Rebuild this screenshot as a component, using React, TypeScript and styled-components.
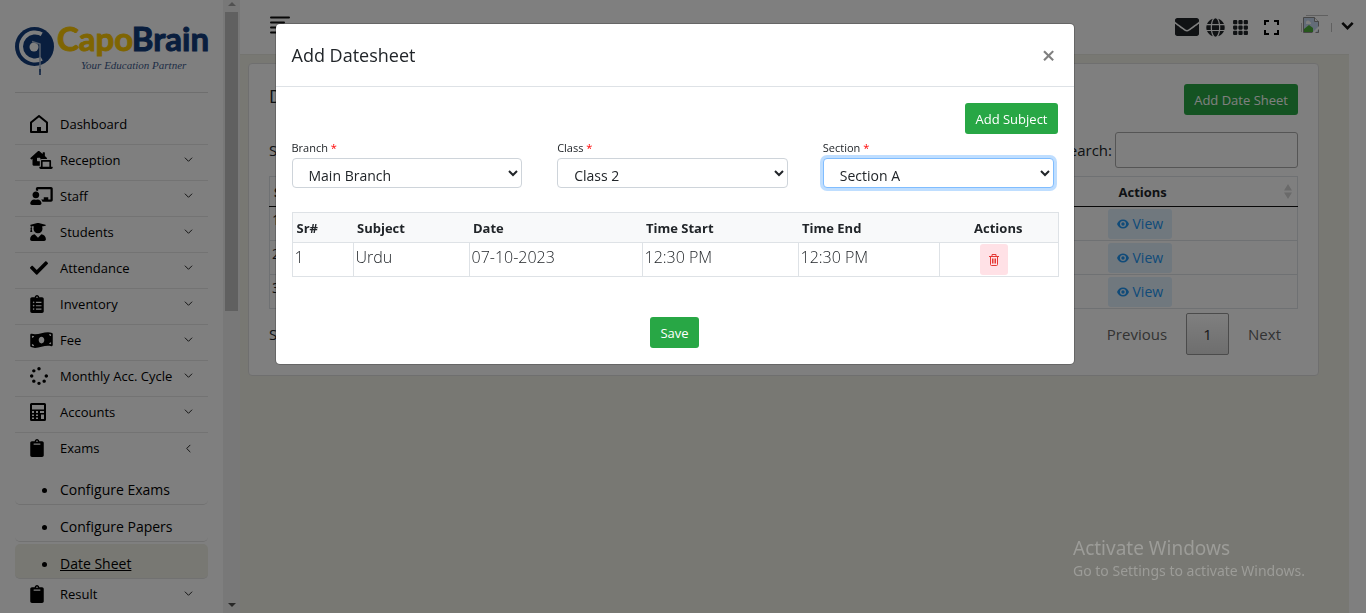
import React from 'react';
import styled, { createGlobalStyle, css } from 'styled-components';
import {
  FaLaptopHouse, FaChalkboardTeacher, FaUserGraduate, FaCheck, FaClipboardList,
  FaMoneyBillWave, FaSpinner, FaClipboard, FaEnvelope, FaGlobe,
} from 'react-icons/fa';
import { BsGrid3X3GapFill } from 'react-icons/bs';

const GlobalStyle = createGlobalStyle`
  *, *::before, *::after { box-sizing: border-box; }
  body {
    margin: 0;
    background: #fff;
    color: #212529;
    font-family: "Open Sans", "Noto Sans", sans-serif;
    font-size: 14px;
    line-height: 20px;
  }
  button, input, select { font-family: inherit; }
`;

/* ---------- Sidebar ---------- */

const Page = styled.div`
  display: flex;
  height: 100vh;
  overflow: hidden;
`;

const Sidebar = styled.aside`
  flex: 0 0 240px;
  display: flex;
  overflow: hidden;
  background: #fff;
`;

const SidebarBody = styled.div`
  flex: 1;
  padding: 8px 15px 0;
  overflow: hidden;
`;

const ScrollTrack = styled.div`
  flex: 0 0 17px;
  display: flex;
  flex-direction: column;
  align-items: center;
  background: #f1f1f1;
`;

const ScrollThumb = styled.div`
  width: 13px;
  height: 299px;
  background: #c1c1c1;
`;

const ScrollArrow = styled.div<{ $down?: boolean }>`
  width: 0;
  height: 0;
  margin: ${p => (p.$down ? 'auto 0 6px' : '2px 0 6px')};
  border: 4px solid transparent;
  ${p => (p.$down
    ? css`border-top-color: #505050; border-bottom-width: 0;`
    : css`border-bottom-color: #a3a3a3; border-top-width: 0;`)}
`;

const LogoLink = styled.a`
  display: block;
  height: 85px;
  border-bottom: 1px solid #dcdcdc;
  svg { display: block; }
`;

const Menu = styled.ul`
  list-style: none;
  margin: 16px 0 0;
  padding: 0;
`;

const MenuLink = styled.a`
  display: flex;
  align-items: center;
  height: 36px;
  padding: 0 15px 6px;
  border-bottom: 1px solid #e6e6e6;
  color: #000;
  text-decoration: none;
`;

const MenuIcon = styled.span<{ $glyph?: number }>`
  flex: 0 0 30px;
  display: flex;
  align-items: center;
  svg {
    width: ${p => p.$glyph ?? 18}px;
    height: 18px;
  }
`;

const MenuText = styled.span`
  flex: 1;
  font-size: 13px;
  white-space: nowrap;
`;

const SubMenu = styled.ul`
  display: grid;
  gap: 2px;
  list-style: none;
  margin: 1px 0 0;
  padding: 0;
`;

const SubLink = styled.a<{ $active?: boolean }>`
  display: flex;
  align-items: center;
  height: 35px;
  padding: 6px 0 0 27px;
  border-bottom: 1px solid #e2e2e2;
  border-radius: 5px;
  color: #000;
  background: ${p => (p.$active ? '#f1f1e6' : 'transparent')};
  text-decoration: ${p => (p.$active ? 'underline' : 'none')};
  &::before {
    content: '';
    width: 5px;
    height: 5px;
    margin-right: 13px;
    border-radius: 50%;
    background: #000;
  }
`;

const ExamsLink = styled(MenuLink)`border-bottom: 0;`;

/* ---------- Main area ---------- */

const Main = styled.main`
  flex: 1;
  display: flex;
  flex-direction: column;
  min-width: 0;
`;

const TopBar = styled.header`
  flex: 0 0 54px;
  display: flex;
  align-items: center;
  padding: 0 12px 0 30px;
  background: #fff;
`;

const IconButton = styled.button`
  display: flex;
  padding: 0;
  border: 0;
  background: none;
  color: #000;
`;

const MenuButton = styled(IconButton)`padding-bottom: 5px;`;

const AccountButton = styled(IconButton)`padding-bottom: 4px;`;

const TopIcons = styled.div`
  display: flex;
  align-items: center;
  margin-left: auto;
`;

const TopIconGroup = styled.div`
  display: flex;
  align-items: center;
  gap: 7px;
  margin-right: 15px;
`;

const Avatar = styled.span`
  display: flex;
  margin: 0 8px 0 22px;
`;

const Content = styled.section`
  flex: 1;
  margin-right: 17px;
  padding: 8px 30px 8px 8px;
  border-top: 1px solid #e9e9e0;
  background: #f1f1e6;
`;

const Card = styled.div`
  padding: 20px 20px 16px;
  border: 1px solid #dfdfdf;
  border-radius: 4px;
  background: #fff;
`;

const CardHead = styled.div`
  display: flex;
  align-items: flex-start;
  justify-content: space-between;
`;

const CardTools = styled.div`
  display: flex;
  align-items: center;
  justify-content: space-between;
  padding: 17px 0 8px;
  font-size: 15px;
`;

const CardFoot = styled.div`
  display: flex;
  align-items: center;
  justify-content: space-between;
  height: 50px;
  font-size: 15px;
`;

const CardTitle = styled.h1`
  margin: 0;
  font-size: 18px;
  line-height: 24px;
  font-weight: 400;
`;

const GreenButton = styled.button`
  height: 31px;
  padding: 0 10px;
  border: 0;
  border-radius: 3px;
  background: #28a745;
  color: #fff;
  font-size: 13px;
  line-height: 20px;
`;

const SearchLabel = styled.label`
  display: flex;
  align-items: center;
  gap: 3px;
`;

const SearchInput = styled.input`
  width: 183px;
  height: 36px;
  border: 1px solid #aaa;
  border-radius: 3px;
  background: #fff;
`;

const ListTable = styled.table`
  width: 100%;
  border: 1px solid #dee2e6;
  border-collapse: collapse;
  table-layout: fixed;
  th {
    height: 30px;
    padding: 0 10px 0 4px;
    border-bottom: 1px solid #111;
    text-align: left;
    font-size: 13px;
  }
  td {
    height: 34px;
    padding: 0 2px;
    border-bottom: 1px solid #dee2e6;
  }
  td:first-child { padding-bottom: 8px; }
  th:last-child, td:last-child { width: 192px; }
`;

const SortHead = styled.span`
  display: flex;
  align-items: center;
  justify-content: space-between;
  padding-left: 9px;
  svg { margin-right: -5px; }
`;

const ViewButton = styled.button`
  display: flex;
  align-items: center;
  gap: 4px;
  height: 30px;
  padding: 0 9px;
  border: 0;
  border-radius: 3px;
  background: #e1f0fd;
  color: #2196f3;
  font-size: 14px;
`;

const Pager = styled.nav`
  display: flex;
  align-items: center;
  margin-right: 17px;
  gap: 19px;
`;

const PagerButton = styled.button<{ $current?: boolean }>`
  height: 42px;
  padding: 0;
  border: 0;
  background: none;
  color: #666;
  font-size: 15px;
  ${p => p.$current && css`
    width: 43px;
    border: 1px solid #979797;
    border-radius: 2px;
    background: linear-gradient(#fff, #dcdcdc);
    color: #333;
  `}
`;

/* ---------- Dialog ---------- */

const Backdrop = styled.div`
  position: fixed;
  inset: 0;
  padding: 23px 17px 23px 0;
  background: rgba(0, 0, 0, 0.5);
`;

const Dialog = styled.div`
  width: 100%;
  max-width: 800px;
  margin: 0 auto;
  border: 1px solid rgba(0, 0, 0, 0.2);
  border-radius: 5px;
  background: #fff;
  background-clip: padding-box;
`;

const DialogHeader = styled.div`
  display: flex;
  align-items: center;
  justify-content: space-between;
  height: 63px;
  padding: 0 18px 0 16px;
  border-bottom: 1px solid #dee2e6;
`;

const DialogTitle = styled.h2`
  margin: 0;
  font-size: 18px;
  line-height: 27px;
  font-weight: 400;
`;

const CloseButton = styled.button`
  padding: 0;
  border: 0;
  background: none;
  color: #7f7f7f;
  font-size: 24px;
  line-height: 24px;
  font-weight: 600;
`;

const DialogBody = styled.form`
  padding: 16px;
`;

const Actions = styled.div<{ $align: string }>`
  display: flex;
  justify-content: ${p => p.$align};
`;

const Fields = styled.div`
  display: grid;
  grid-template-columns: repeat(3, 1fr);
  gap: 35px;
  margin: 4px 0 24px;
  padding-right: 4px;
`;

const Field = styled.label`
  display: block;
  font-size: 11px;
  line-height: 20px;
`;

const Required = styled.span`color: #f00;`;

const Select = styled.select<{ $active?: boolean }>`
  display: block;
  width: 100%;
  height: 30px;
  padding: 5px 0 0 12px;
  border: 1px solid ${p => (p.$active ? '#80bdff' : '#ced4da')};
  border-radius: 4px;
  outline: 0;
  background: #fff;
  color: #212529;
  font-size: 14px;
  box-shadow: ${p => (p.$active ? '0 0 0 3px rgba(0, 123, 255, 0.25)' : 'none')};
`;

const SubjectTable = styled.table`
  width: 100%;
  margin-bottom: 40px;
  border-collapse: collapse;
  table-layout: fixed;
  border: 1px solid #dee2e6;
  thead { background: #f8f9fa; }
  th {
    height: 30px;
    padding: 0 4px;
    border-bottom: 1px solid #dee2e6;
    text-align: left;
    font-size: 13px;
  }
  td {
    height: 34px;
    padding: 0 2px 6px;
    border: 1px solid #dee2e6;
    font-size: 16px;
    font-weight: 300;
  }
  th:last-child { text-align: center; }
  td:last-child { padding: 1px 9px 1px 0; }
`;

const DeleteButton = styled.button`
  display: flex;
  align-items: center;
  justify-content: center;
  width: 28px;
  height: 31px;
  margin: 0 auto;
  padding: 0;
  border: 0;
  border-radius: 3px;
  background: #ffe1e6;
  color: #e53935;
`;

const Watermark = styled.div`
  position: fixed;
  right: 57px;
  bottom: 32px;
  min-width: 236px;
  color: #9c9c98;
  font-family: "Noto Sans", sans-serif;
  font-size: 14px;
  line-height: 20px;
  pointer-events: none;
`;

const WatermarkTitle = styled.div`
  font-size: 19px;
  line-height: 25px;
`;

/* ---------- Drawings ---------- */

const Logo = () => (
  <svg width="194" height="76" viewBox="0 -16 194 76" role="img" aria-label="CapoBrain">
    <circle cx="19.500" cy="22.500" r="19.500" fill="#123c7c" />
    <path d="M28 11 A14 14 0 1 0 28 34" fill="none" stroke="#fff" strokeWidth="4" />
    <path d="M28 8 L33 14 V31 L28 37 L24 30 V15Z" fill="#123c7c" />
    <circle cx="19" cy="23" r="4.500" fill="#fff" />
    <path d="M17 17.500 L25 20 V48" fill="none" stroke="#a9b9d2" strokeWidth="1.500" />
    <path d="M25 45v6" stroke="#123c7c" strokeWidth="1.500" />
    <text x="42" y="27" fontFamily="Lato, sans-serif" fontSize="33" fontWeight="700" fill="#ffcb05" stroke="#ffcb05" strokeWidth="1">Capo</text>
    <text x="194" y="27" textAnchor="end" fontFamily="Lato, sans-serif" fontSize="33" fontWeight="700" fill="#123c7c" stroke="#123c7c" strokeWidth="1">Brain</text>
    <text x="66" y="45" fontFamily="Liberation Serif, serif" fontSize="11" fontStyle="italic" fill="#3d5a8c">Your Education Partner</text>
  </svg>
);

const HomeIcon = () => (
  <svg viewBox="0 0 18 18" fill="none" stroke="#000" strokeWidth="2" strokeLinejoin="round">
    <path d="M1 7.500 9 1l8 6.500V17H1Z" />
    <path d="M9 12v5" strokeWidth="4" />
  </svg>
);

const CalculatorIcon = () => (
  <svg viewBox="0 0 16 18">
    <path fill="#000" fillRule="evenodd" d="M1.500 0h13A1.500 1.500 0 0 1 16 1.500v15a1.500 1.500 0 0 1-1.500 1.500h-13A1.500 1.500 0 0 1 0 16.500v-15A1.500 1.500 0 0 1 1.500 0ZM2 2v4.500h12V2ZM2 8v2h2V8Zm4 0v2h2V8Zm4 0v2h4V8ZM2 11.500v1.500h2v-1.500Zm4 0v1.500h2v-1.500Zm5 0V16h3v-4.500ZM2 14.500V16h2v-1.500Zm4 0V16h2v-1.500Z" />
  </svg>
);

const Chevron = ({ left = false, size = 9, weight = 1 }) => (
  <svg width={size} height={size} viewBox="0 0 10 10" fill="none" stroke="#111" strokeWidth={weight}>
    <path d={left ? 'M7 1 3 5l4 4' : 'M1 3l4 4 4-4'} />
  </svg>
);

const MenuBars = () => (
  <svg width="20" height="18" viewBox="0 0 20 18" stroke="#111" strokeWidth="2" strokeLinecap="round">
    <path d="M1 1.500h18M1 6.500h13M1 11.500h18M1 16.500h13" />
  </svg>
);

const ExpandIcon = () => (
  <svg width="15" height="15" viewBox="0 0 15 15" fill="none" stroke="#000" strokeWidth="2">
    <path d="M1 5V1h4M10 1h4v4M14 10v4h-4M5 14H1v-4" />
  </svg>
);

const BrokenImage = () => (
  <svg width="32" height="24" viewBox="0 0 32 24">
    <path d="M5 .5h22M.5 8v9M30.500 8v9" stroke="#c0c0c0" />
    <g transform="translate(2 2)">
      <path d="M.5.500h11l4 4v11H.5Z" fill="#c6d8f0" stroke="#8c8c8c" />
      <path d="M3 6a2 2 0 0 1 4-1 1.500 1.500 0 0 1 1 2H3Z" fill="#fff" />
      <path d="M1 15v-3l5-4 4 3v4Z" fill="#4caf38" />
      <path d="M11.500.500v4h4" fill="#fff" stroke="#8c8c8c" />
      <path d="m9 16 7-7v3l-4 4Z" fill="#fff" />
    </g>
  </svg>
);

const SortIcon = () => (
  <svg width="8" height="15" viewBox="0 0 8 15" fill="#d4d4d4">
    <path d="M4 0l4 6.500H0ZM4 15l4-6.500H0Z" />
  </svg>
);

const EyeIcon = () => (
  <svg width="12" height="10" viewBox="0 0 12 10">
    <path fill="currentColor" fillRule="evenodd" d="M6 .5c3 0 5 2 6 4.500-1 2.500-3 4.500-6 4.500S1 7.500 0 5C1 2.500 3 .5 6 .5Zm0 1.500a3 3 0 1 0 0 6 3 3 0 0 0 0-6Zm0 1.300a1.700 1.700 0 1 1 0 3.400 1.700 1.700 0 0 1 0-3.400Z" />
  </svg>
);

const TrashIcon = () => (
  <svg width="10" height="12" viewBox="0 0 10 12" fill="none" stroke="currentColor">
    <path d="M0 2.500h10M3 2V.5h4V2M1.500 3v7.500a1 1 0 0 0 1 1h5a1 1 0 0 0 1-1V3M3.500 4.500v5M5 4.500v5M6.500 4.500v5" />
  </svg>
);

/* ---------- Data ---------- */

const menu = [
  { label: 'Reception', glyph: 23, icon: <FaLaptopHouse /> },
  { label: 'Staff', glyph: 23, icon: <FaChalkboardTeacher /> },
  { label: 'Students', glyph: 16, icon: <FaUserGraduate /> },
  { label: 'Attendance', glyph: 18, icon: <FaCheck /> },
  { label: 'Inventory', glyph: 14, icon: <FaClipboardList /> },
  { label: 'Fee', glyph: 23, icon: <FaMoneyBillWave /> },
  { label: 'Monthly Acc. Cycle', glyph: 18, icon: <FaSpinner /> },
  { label: 'Accounts', glyph: 16, icon: <CalculatorIcon /> },
];

const columns = [
  { name: 'Sr#', width: 61 },
  { name: 'Subject', width: 116 },
  { name: 'Date', width: 173 },
  { name: 'Time Start', width: 156 },
  { name: 'Time End', width: 141 },
  { name: 'Actions', width: 119 },
];

const fields = [
  { name: 'Branch', value: 'Main Branch' },
  { name: 'Class', value: 'Class 2' },
  { name: 'Section', value: 'Section A', active: true },
];

export default function App() {
  return (
    <>
      <GlobalStyle />
      <Page>
        <Sidebar>
          <SidebarBody>
            <LogoLink href="#"><Logo /></LogoLink>
            <Menu>
              <li>
                <MenuLink href="#"><MenuIcon><HomeIcon /></MenuIcon><MenuText>Dashboard</MenuText></MenuLink>
              </li>
              {menu.map(item => (
                <li key={item.label}>
                  <MenuLink href="#">
                    <MenuIcon $glyph={item.glyph}>{item.icon}</MenuIcon>
                    <MenuText>{item.label}</MenuText>
                    <Chevron />
                  </MenuLink>
                </li>
              ))}
              <li>
                <ExamsLink href="#">
                  <MenuIcon $glyph={14}><FaClipboard /></MenuIcon><MenuText>Exams</MenuText><Chevron left />
                </ExamsLink>
                <SubMenu>
                  <li><SubLink href="#">Configure Exams</SubLink></li>
                  <li><SubLink href="#">Configure Papers</SubLink></li>
                  <li><SubLink href="#" $active>Date Sheet</SubLink></li>
                </SubMenu>
              </li>
              <li>
                <MenuLink href="#">
                  <MenuIcon $glyph={14}><FaClipboard /></MenuIcon><MenuText>Result</MenuText><Chevron />
                </MenuLink>
              </li>
            </Menu>
          </SidebarBody>
          <ScrollTrack>
            <ScrollArrow />
            <ScrollThumb />
            <ScrollArrow $down />
          </ScrollTrack>
        </Sidebar>
        <Main>
          <TopBar>
            <MenuButton aria-label="Toggle menu"><MenuBars /></MenuButton>
            <TopIcons>
              <TopIconGroup>
                <FaEnvelope size={24} />
                <FaGlobe size={19} />
                <BsGrid3X3GapFill size={17} />
              </TopIconGroup>
              <IconButton aria-label="Full screen"><ExpandIcon /></IconButton>
              <Avatar><BrokenImage /></Avatar>
              <AccountButton aria-label="Account"><Chevron size={13} weight={2} /></AccountButton>
            </TopIcons>
          </TopBar>
          <Content>
            <Card>
              <CardHead>
                <CardTitle>Date Sheet</CardTitle>
                <GreenButton>Add Date Sheet</GreenButton>
              </CardHead>
              <CardTools>
                <span>Show</span>
                <SearchLabel>Search:<SearchInput type="search" /></SearchLabel>
              </CardTools>
              <ListTable>
                <thead>
                  <tr><th>Sr#</th><th><SortHead>Actions<SortIcon /></SortHead></th></tr>
                </thead>
                <tbody>
                  {[1, 2, 3].map(n => (
                    <tr key={n}><td>{n}</td><td><ViewButton><EyeIcon />View</ViewButton></td></tr>
                  ))}
                </tbody>
              </ListTable>
              <CardFoot>
                <span>Showing</span>
                <Pager>
                  <PagerButton>Previous</PagerButton>
                  <PagerButton $current>1</PagerButton>
                  <PagerButton>Next</PagerButton>
                </Pager>
              </CardFoot>
            </Card>
          </Content>
        </Main>
      </Page>
      <Backdrop>
        <Dialog role="dialog" aria-modal="true" aria-labelledby="dialog-title">
          <DialogHeader>
            <DialogTitle id="dialog-title">Add Datesheet</DialogTitle>
            <CloseButton aria-label="Close">×</CloseButton>
          </DialogHeader>
          <DialogBody>
            <Actions $align="flex-end"><GreenButton type="button">Add Subject</GreenButton></Actions>
            <Fields>
              {fields.map(f => (
                <Field key={f.name}>
                  {f.name} <Required>*</Required>
                  <Select $active={f.active}><option>{f.value}</option></Select>
                </Field>
              ))}
            </Fields>
            <SubjectTable>
              <colgroup>{columns.map(c => <col key={c.name} width={c.width} />)}</colgroup>
              <thead>
                <tr>{columns.map(c => <th key={c.name}>{c.name}</th>)}</tr>
              </thead>
              <tbody>
                <tr>
                  <td>1</td><td>Urdu</td><td>07-10-2023</td><td>12:30 PM</td><td>12:30 PM</td>
                  <td><DeleteButton type="button" aria-label="Delete"><TrashIcon /></DeleteButton></td>
                </tr>
              </tbody>
            </SubjectTable>
            <Actions $align="center"><GreenButton type="button">Save</GreenButton></Actions>
          </DialogBody>
        </Dialog>
      </Backdrop>
      <Watermark>
        <WatermarkTitle>Activate Windows</WatermarkTitle>
        Go to Settings to activate Windows.
      </Watermark>
    </>
  );
}
